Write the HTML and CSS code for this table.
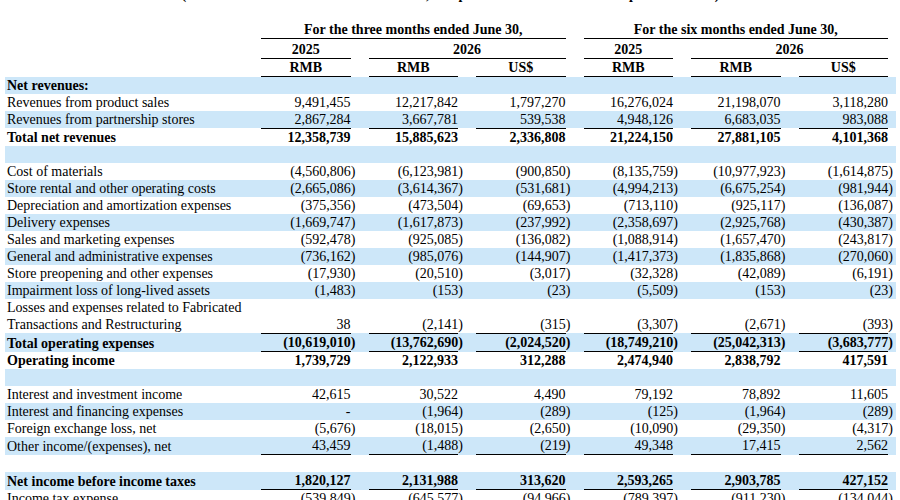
FILE: index.html
```html
<!DOCTYPE html>
<html lang="en">
<head>
  <meta charset="UTF-8">
  <title>Unaudited Condensed Consolidated Statements of Comprehensive Income</title>
  <link rel="stylesheet" href="styles.css">
</head>
<body>
  <div class="sheet">
    <p class="title">(Amounts in thousands of RMB and US$, except for number of shares and per share data)</p>

    <!-- Column headers -->
    <div class="head">
      <div class="row">
        <span></span>
        <span class="grp g1">For the three months ended June 30,</span>
        <span class="grp g2">For the six months ended June 30,</span>
      </div>
      <div class="row years">
        <span></span>
        <span class="grp">2025</span>
        <span class="grp span2">2026</span>
        <span class="grp">2025</span>
        <span class="grp span2">2026</span>
      </div>
      <div class="row">
        <span></span>
        <span class="grp">RMB</span>
        <span class="grp">RMB</span>
        <span class="grp">US$</span>
        <span class="grp">RMB</span>
        <span class="grp">RMB</span>
        <span class="grp">US$</span>
      </div>
    </div>

    <!-- Statement lines -->
    <div class="lines">
      <div class="row total"><span class="lbl">Net revenues:</span></div>
      <div class="row">
        <span class="lbl">Revenues from product sales</span>
        <span class="n">9,491,455</span><span class="n">12,217,842</span><span class="n">1,797,270</span>
        <span class="n">16,276,024</span><span class="n">21,198,070</span><span class="n">3,118,280</span>
      </div>
      <div class="row">
        <span class="lbl">Revenues from partnership stores</span>
        <span class="n">2,867,284</span><span class="n">3,667,781</span><span class="n">539,538</span>
        <span class="n">4,948,126</span><span class="n">6,683,035</span><span class="n">983,088</span>
      </div>
      <div class="row total top">
        <span class="lbl">Total net revenues</span>
        <span class="n">12,358,739</span><span class="n">15,885,623</span><span class="n">2,336,808</span>
        <span class="n">21,224,150</span><span class="n">27,881,105</span><span class="n">4,101,368</span>
      </div>
      <div class="row"></div>
      <div class="row">
        <span class="lbl">Cost of materials</span>
        <span class="n">(4,560,806<i>)</i></span><span class="n">(6,123,981<i>)</i></span><span class="n">(900,850<i>)</i></span>
        <span class="n">(8,135,759<i>)</i></span><span class="n">(10,977,923<i>)</i></span><span class="n">(1,614,875<i>)</i></span>
      </div>
      <div class="row">
        <span class="lbl">Store rental and other operating costs</span>
        <span class="n">(2,665,086<i>)</i></span><span class="n">(3,614,367<i>)</i></span><span class="n">(531,681<i>)</i></span>
        <span class="n">(4,994,213<i>)</i></span><span class="n">(6,675,254<i>)</i></span><span class="n">(981,944<i>)</i></span>
      </div>
      <div class="row">
        <span class="lbl">Depreciation and amortization expenses</span>
        <span class="n">(375,356<i>)</i></span><span class="n">(473,504<i>)</i></span><span class="n">(69,653<i>)</i></span>
        <span class="n">(713,110<i>)</i></span><span class="n">(925,117<i>)</i></span><span class="n">(136,087<i>)</i></span>
      </div>
      <div class="row">
        <span class="lbl">Delivery expenses</span>
        <span class="n">(1,669,747<i>)</i></span><span class="n">(1,617,873<i>)</i></span><span class="n">(237,992<i>)</i></span>
        <span class="n">(2,358,697<i>)</i></span><span class="n">(2,925,768<i>)</i></span><span class="n">(430,387<i>)</i></span>
      </div>
      <div class="row">
        <span class="lbl">Sales and marketing expenses</span>
        <span class="n">(592,478<i>)</i></span><span class="n">(925,085<i>)</i></span><span class="n">(136,082<i>)</i></span>
        <span class="n">(1,088,914<i>)</i></span><span class="n">(1,657,470<i>)</i></span><span class="n">(243,817<i>)</i></span>
      </div>
      <div class="row">
        <span class="lbl">General and administrative expenses</span>
        <span class="n">(736,162<i>)</i></span><span class="n">(985,076<i>)</i></span><span class="n">(144,907<i>)</i></span>
        <span class="n">(1,417,373<i>)</i></span><span class="n">(1,835,868<i>)</i></span><span class="n">(270,060<i>)</i></span>
      </div>
      <div class="row">
        <span class="lbl">Store preopening and other expenses</span>
        <span class="n">(17,930<i>)</i></span><span class="n">(20,510<i>)</i></span><span class="n">(3,017<i>)</i></span>
        <span class="n">(32,328<i>)</i></span><span class="n">(42,089<i>)</i></span><span class="n">(6,191<i>)</i></span>
      </div>
      <div class="row">
        <span class="lbl">Impairment loss of long-lived assets</span>
        <span class="n">(1,483<i>)</i></span><span class="n">(153<i>)</i></span><span class="n">(23<i>)</i></span>
        <span class="n">(5,509<i>)</i></span><span class="n">(153<i>)</i></span><span class="n">(23<i>)</i></span>
      </div>
      <div class="row">
        <span class="lbl nowrap">Losses and expenses related to Fabricated<br>Transactions and Restructuring</span>
        <span class="n">38</span><span class="n">(2,141<i>)</i></span><span class="n">(315<i>)</i></span>
        <span class="n">(3,307<i>)</i></span><span class="n">(2,671<i>)</i></span><span class="n">(393<i>)</i></span>
      </div>
      <div class="row total top bot">
        <span class="lbl">Total operating expenses</span>
        <span class="n">(10,619,010<i>)</i></span><span class="n">(13,762,690<i>)</i></span><span class="n">(2,024,520<i>)</i></span>
        <span class="n">(18,749,210<i>)</i></span><span class="n">(25,042,313<i>)</i></span><span class="n">(3,683,777<i>)</i></span>
      </div>
      <div class="row total">
        <span class="lbl">Operating income</span>
        <span class="n">1,739,729</span><span class="n">2,122,933</span><span class="n">312,288</span>
        <span class="n">2,474,940</span><span class="n">2,838,792</span><span class="n">417,591</span>
      </div>
      <div class="row"></div>
      <div class="row">
        <span class="lbl">Interest and investment income</span>
        <span class="n">42,615</span><span class="n">30,522</span><span class="n">4,490</span>
        <span class="n">79,192</span><span class="n">78,892</span><span class="n">11,605</span>
      </div>
      <div class="row">
        <span class="lbl">Interest and financing expenses</span>
        <span class="n">-</span><span class="n">(1,964<i>)</i></span><span class="n">(289<i>)</i></span>
        <span class="n">(125<i>)</i></span><span class="n">(1,964<i>)</i></span><span class="n">(289<i>)</i></span>
      </div>
      <div class="row">
        <span class="lbl">Foreign exchange loss, net</span>
        <span class="n">(5,676<i>)</i></span><span class="n">(18,015<i>)</i></span><span class="n">(2,650<i>)</i></span>
        <span class="n">(10,090<i>)</i></span><span class="n">(29,350<i>)</i></span><span class="n">(4,317<i>)</i></span>
      </div>
      <div class="row bot">
        <span class="lbl">Other income/(expenses), net</span>
        <span class="n">43,459</span><span class="n">(1,488<i>)</i></span><span class="n">(219<i>)</i></span>
        <span class="n">49,348</span><span class="n">17,415</span><span class="n">2,562</span>
      </div>
      <div class="row"></div>
      <div class="row total bot">
        <span class="lbl">Net income before income taxes</span>
        <span class="n">1,820,127</span><span class="n">2,131,988</span><span class="n">313,620</span>
        <span class="n">2,593,265</span><span class="n">2,903,785</span><span class="n">427,152</span>
      </div>
      <div class="row">
        <span class="lbl">Income tax expense</span>
        <span class="n">(539,849<i>)</i></span><span class="n">(645,577<i>)</i></span><span class="n">(94,966<i>)</i></span>
        <span class="n">(789,397<i>)</i></span><span class="n">(911,230<i>)</i></span><span class="n">(134,044<i>)</i></span>
      </div>
    </div>
  </div>
</body>
</html>
```

FILE: styles.css
```css
* {
  margin: 0;
  padding: 0;
  box-sizing: border-box;
}

body {
  background: #fff;
  color: #000;
  font-family: "Liberation Serif", "Times New Roman", serif;
  font-size: 14px;
  line-height: 17px;
  overflow: hidden;
}

.sheet {
  width: 891px;
  margin-left: 5px;
}

.title {
  margin-top: -14px;
  margin-bottom: 18px;
  text-align: center;
  font-weight: bold;
}

/* one grid per statement line: label + six figure columns */
.row {
  display: grid;
  grid-template-columns: 238px repeat(6, 89.5px);
  column-gap: 18px;
  padding-right: 8px;
  min-height: 17px;
}

.row > span {
  align-self: end;
}

/* header */
.head {
  font-weight: bold;
}

.head .grp {
  text-align: center;
  border-bottom: 1px solid #000;
}

.head .years {
  padding-top: 2px;
}

.g1 {
  grid-column: 2 / 5;
}

.g2 {
  grid-column: 5 / 8;
}

.span2 {
  grid-column: span 2;
}

/* body lines */
.lines .row:nth-child(odd) {
  background: #cde7f9;
}

.lbl {
  padding-left: 2px;
}

.nowrap {
  white-space: nowrap;
}

.n {
  text-align: right;
  white-space: nowrap;
}

/* closing paren hangs past the figure column */
.n i {
  font-style: normal;
  margin-right: -5px;
}

.total {
  font-weight: bold;
}

.top .n {
  border-top: 1px solid #000;
}

.bot .n {
  border-bottom: 1px solid #000;
}
```
